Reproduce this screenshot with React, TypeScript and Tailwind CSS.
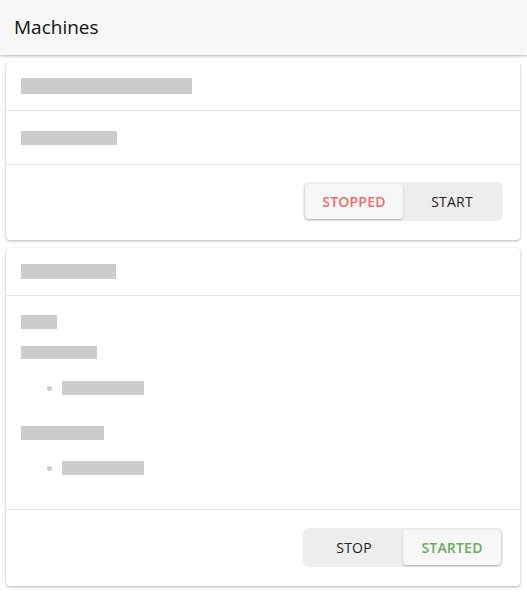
import React from "react";

const Bar = ({ w, h = 14, className = "" }: { w: number; h?: number; className?: string }) => (
  <div className={`bg-[#cccccc] ${className}`} style={{ width: w, height: h }} />
);

function Toggle({ active }: { active: "left" | "right" }) {
  return (
    <div className="flex h-[39px] w-[200px] rounded-[6px] bg-[#ededed] p-[2px] text-[14px] tracking-[0.2px]">
      <div
        className={`flex flex-1 items-center justify-center rounded-[4px] ${
          active === "left"
            ? "bg-[#f7f7f7] shadow-[0_1px_2px_rgba(0,0,0,0.25)] font-semibold text-[#f06a6a]"
            : "text-[#222222]"
        }`}
      >
        {active === "left" ? "STOPPED" : "STOP"}
      </div>
      <div
        className={`flex flex-1 items-center justify-center rounded-[4px] ${
          active === "right"
            ? "bg-[#f7f7f7] shadow-[0_1px_2px_rgba(0,0,0,0.25)] font-semibold text-[#6aaa5c]"
            : "text-[#222222]"
        }`}
      >
        {active === "right" ? "STARTED" : "START"}
      </div>
    </div>
  );
}

export default function App() {
  return (
    <div className="min-h-[592px] w-[527px] bg-white" style={{ fontFamily: '"Open Sans", "Noto Sans", sans-serif' }}>
      <div className="flex h-[55px] items-center bg-[#f7f7f7] pl-[14px] text-[19px] text-[#111111] shadow-[0_1px_3px_rgba(0,0,0,0.3)]">
        Machines
      </div>
      <div className="flex flex-col gap-[8px] pl-[6px] pt-[7px]">
        <div className="w-[514px] rounded-[4px] bg-white shadow-[0_1px_3px_rgba(0,0,0,0.3)]">
          <div className="flex h-[49px] items-center border-b border-[#e6e6e6] px-[15px]">
            <Bar w={171} h={16} />
          </div>
          <div className="flex h-[54px] items-center border-b border-[#e6e6e6] px-[15px]">
            <Bar w={96} h={14} />
          </div>
          <div className="flex h-[75px] items-start justify-end pr-[17px] pt-[17px]">
            <Toggle active="left" />
          </div>
        </div>
        <div className="w-[514px] rounded-[4px] bg-white shadow-[0_1px_3px_rgba(0,0,0,0.3)]">
          <div className="flex h-[48px] items-center border-b border-[#e6e6e6] px-[15px]">
            <Bar w={95} h={15} />
          </div>
          <div className="h-[214px] border-b border-[#e6e6e6] px-[15px] pt-[19px]">
            <Bar w={36} h={14} />
            <Bar w={76} h={13} className="mt-[17px]" />
            <div className="mt-[22px] flex items-center pl-[26px]">
              <div className="h-[5px] w-[5px] rounded-full bg-[#cccccc]" />
              <Bar w={82} h={14} className="ml-[10px]" />
            </div>
            <Bar w={83} h={14} className="mt-[31px]" />
            <div className="mt-[21px] flex items-center pl-[26px]">
              <div className="h-[5px] w-[5px] rounded-full bg-[#cccccc]" />
              <Bar w={82} h={14} className="ml-[10px]" />
            </div>
          </div>
          <div className="flex h-[76px] items-start justify-end pr-[17px] pt-[18px]">
            <Toggle active="right" />
          </div>
        </div>
      </div>
    </div>
  );
}
